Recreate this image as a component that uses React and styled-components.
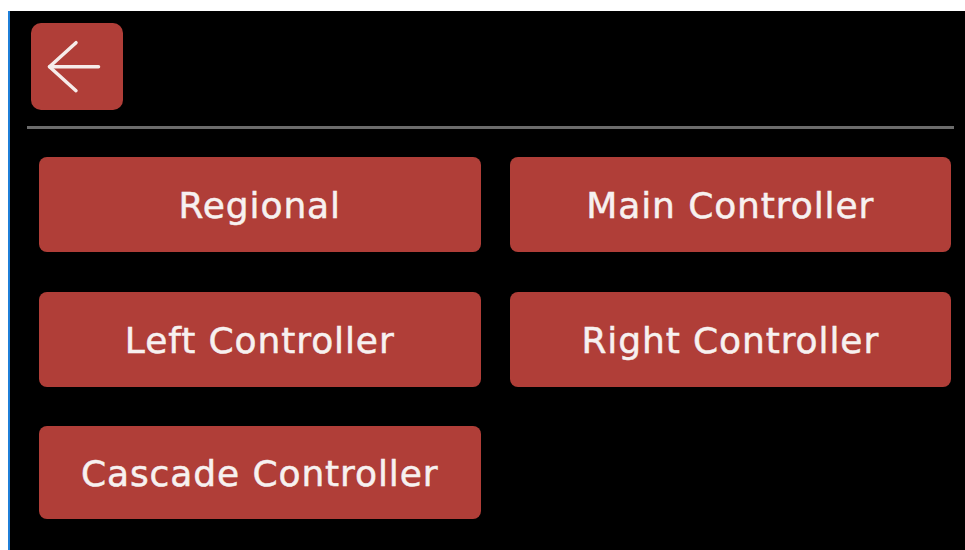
import React from "react";
import styled, { createGlobalStyle } from "styled-components";

const Global = createGlobalStyle`
  html, body { margin: 0; padding: 0; background: #ffffff; }
  body { font-family: "DejaVu Sans", Verdana, sans-serif; }
  #root { padding: 11px 0 0 8px; }
`;

const Screen = styled.div`
  box-sizing: border-box;
  height: 539px;
  background: #000000;
  border-left: 2px solid #1f7fd8;
  display: flex;
  flex-direction: column;
`;

const Header = styled.div`
  display: flex;
  padding: 12px 0 0 21px;
`;

const BackButton = styled.button`
  width: 92px;
  height: 87px;
  padding: 0;
  border: none;
  border-radius: 10px;
  background: #b03e38;
  display: flex;
  align-items: center;
  justify-content: center;
  cursor: pointer;
`;

const Divider = styled.div`
  height: 3px;
  margin: 16px 11px 0 17px;
  background: #6c6c6c;
`;

const Grid = styled.div`
  display: grid;
  grid-template-columns: 1fr 1fr;
  grid-template-rows: 95px 95px 93px;
  column-gap: 29px;
  row-gap: 39.5px;
  padding: 28px 14px 0 29px;
`;

const MenuButton = styled.button`
  border: none;
  border-radius: 8px;
  background: #b03e38;
  color: #f7f1f0;
  font-family: "DejaVu Sans", Verdana, sans-serif;
  font-size: 36px;
  letter-spacing: 0.9px;
  -webkit-text-stroke: 0.5px #f7f1f0;
  display: flex;
  align-items: center;
  justify-content: center;
  padding: 2px 0 0 0;
  cursor: pointer;
`;

const items = [
  "Regional",
  "Main Controller",
  "Left Controller",
  "Right Controller",
  "Cascade Controller",
];

export default function App() {
  return (
    <>
      <Global />
      <Screen>
        <Header>
          <BackButton aria-label="Back">
            <svg width="92" height="87" viewBox="0 0 92 87">
              <g
                stroke="#f6ecea"
                strokeWidth="3.5"
                strokeLinecap="round"
                strokeLinejoin="round"
                fill="none"
              >
                <path d="M67.5 43.7 H18.5" />
                <path d="M45 19.7 L18.5 43.7 L45 67.7" />
              </g>
            </svg>
          </BackButton>
        </Header>
        <Divider />
        <Grid>
          {items.map((t) => (
            <MenuButton key={t}>{t}</MenuButton>
          ))}
        </Grid>
      </Screen>
    </>
  );
}
